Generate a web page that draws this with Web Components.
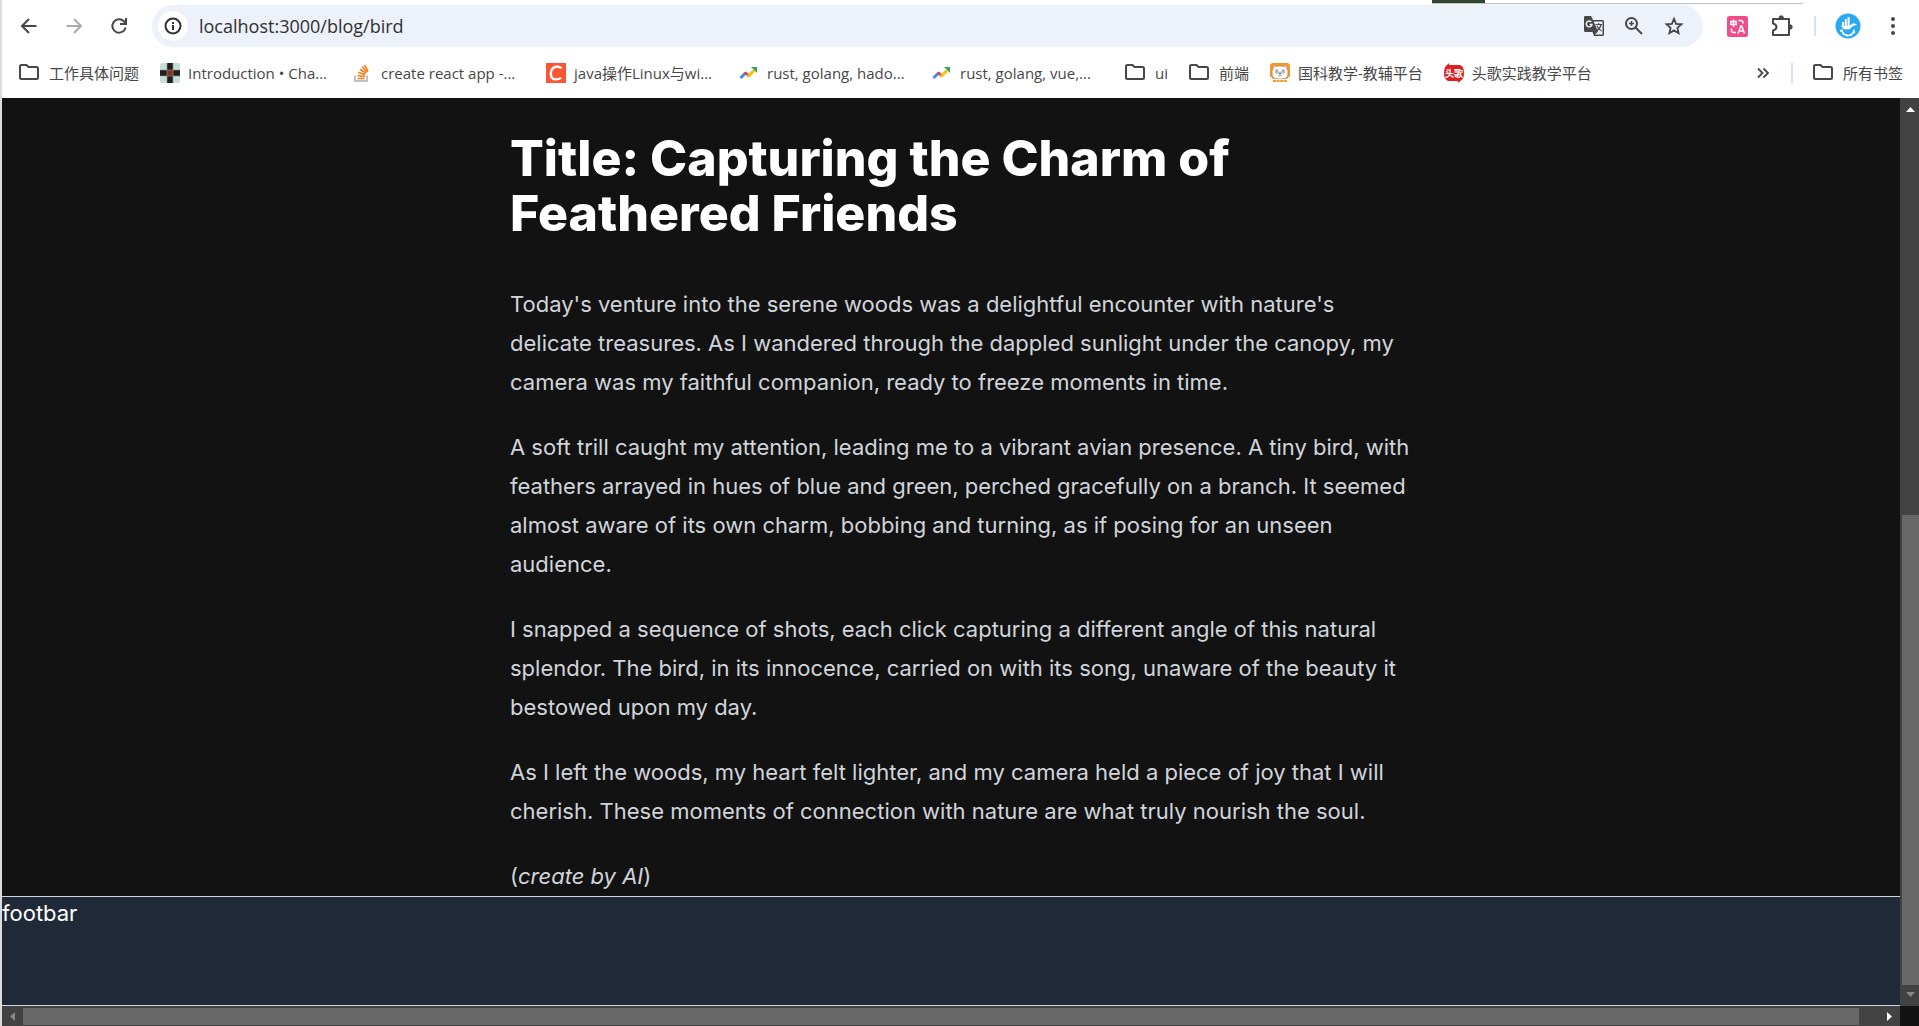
<!DOCTYPE html>
<html lang="zh-CN">
<head>
<meta charset="utf-8">
<title>localhost:3000/blog/bird</title>
<style>
html, body { height: 100%; margin: 0; }
body { background: #fff; overflow: hidden; }
</style>
</head>
<body>
<browser-window></browser-window>

<script>
const ICONS = {
  back: '<svg viewBox="0 0 20 20" width="20" height="20" fill="none" stroke="#474747" stroke-width="2"><path d="M17.5 10H3.5M10 3L3 10l7 7"/></svg>',
  forward: '<svg viewBox="0 0 20 20" width="20" height="20" fill="none" stroke="#aaa" stroke-width="2"><path d="M2.500 10H16.500M10 3l7 7-7 7"/></svg>',
  reload: '<svg viewBox="0 0 20 20" width="20" height="20" fill="none" stroke="#474747" stroke-width="2"><path d="M16.600 11.500A6.700 6.700 0 1 1 14.900 5.300L17 7.500"/><path d="M17 2v6h-6"/></svg>',
  info: '<svg viewBox="0 0 20 20" width="20" height="20" fill="none" stroke="#303030" stroke-width="2"><circle cx="10" cy="10" r="7.500"/><path d="M10 9v5M10 6v2"/></svg>',
  folder: '<svg viewBox="0 0 20 20" width="20" height="20" fill="none" stroke="#474747" stroke-width="2" stroke-linejoin="round"><path d="M1 14.500V3.500Q1 2 2.500 2H7.500l2 2H17.500Q19 4 19 5.500V14.500Q19 16 17.500 16H2.500Q1 16 1 14.500Z"/></svg>',
  tiles: '<svg viewBox="0 0 20 20" width="20" height="20"><rect width="20" height="20" rx="2" fill="#c9dcd8"/><path d="M7 0h6v7H7zM0 7h7v6H0zM13 7h7v6h-7zM7 13h6v7H7z" fill="#241d1d"/><path d="M7 7h6v6H7z" fill="#7a3420"/><path d="M7 0v20M13 0v20M0 7h20M0 13h20" stroke="#8b9a98" stroke-width=".6"/></svg>',
  stack: '<svg viewBox="0 0 20 20" width="20" height="20" fill="none"><path d="M2 12.500v5.500H14V12.500" stroke="#a9adb3" stroke-width="1.500"/><g stroke="#f48024" stroke-width="1.700"><path d="M4.500 15.500h7M4.500 12.500l7.200 1.200M5.200 9.300l7 2.600M7 6.200l6 4.200M9 3.500l5 5.700M11.500 2l3.500 6.500"/></g></svg>',
  csdn: '<svg viewBox="0 0 20 20" width="20" height="20" fill="none"><path d="M0 0h20v20H0z" fill="#fc5531"/><path d="M15.500 5.200Q13.500 3.500 10.500 3.800Q5 4.500 4.800 10.500Q4.800 16.400 10 16.400Q13 16.400 15 14.900" stroke="#fff" stroke-width="2.400"/></svg>',
  trend: '<svg viewBox="0 0 20 20" width="20" height="20" fill="none" stroke-width="2.800"><path d="M1.500 15L7 9.500" stroke="#4285f4"/><path d="M6 9.500l4 3.500" stroke="#ea4335"/><path d="M9 13.500l6-6" stroke="#fbbc04"/><path d="M12 4h6v6z" fill="#34a853"/></svg>',
  bear: '<svg viewBox="0 0 20 20" width="20" height="20"><path d="M3 0H17Q20 0 20 3V13L17 16H3L0 13V3Q0 0 3 0" fill="#f49a24"/><circle cx="5" cy="4.500" r="2" fill="#fff" stroke="#8a7660" stroke-width=".5"/><circle cx="15" cy="4.500" r="2" fill="#fff" stroke="#8a7660" stroke-width=".5"/><path d="M2.500 13Q0 3 10 3T17.500 13Q17 16 10 16T2.500 13" fill="#fff" stroke="#8a7660" stroke-width=".5"/><path d="M5 7h3M12 7h3M8 12q2 2 4 0" stroke="#666" stroke-width=".6" fill="none"/><g fill="none" stroke="#666" stroke-width=".7"><circle cx="7" cy="9" r="1.300"/><circle cx="13" cy="9" r="1.300"/></g><circle cx="10" cy="10.500" r="1" fill="#555"/><path d="M3 18h14" stroke="#f49a24" stroke-width="2.200" stroke-dasharray="3 .6"/></svg>',
  touge: '<svg viewBox="0 0 20 20" width="20" height="20"><path d="M5 0V2H16Q20 3 20 10Q20 16 17 17.500L14 20V18H4Q0 16 0 10Q0 4 3 2Z" fill="#e02020"/><text x="10" y="13.500" text-anchor="middle" font-size="9" font-weight="700" fill="#fff" font-family="Noto Sans CJK SC, sans-serif">头歌</text></svg>',
  translate: '<svg viewBox="0 0 22 22" width="22" height="22"><path d="M2 1H8l2 4H19.500Q21 5 21 6.500V19.500Q21 21 19.500 21H11L9.500 17H2.500Q1 17 1 15.500V2.500Q1 1 2 1" fill="#474747"/><path d="M10.700 6.500H19.500V19.500H12L15 16.500Z" fill="#edf1fa"/><path d="M12.500 9.500H19M15.700 8v1.500M18 9.500Q17 14 13 16M14 11q1.500 3.500 4.500 5" fill="none" stroke="#474747" stroke-width="1.200"/><path d="M8.300 7A2.900 2.900 0 1 0 9 9.500H6.500" fill="none" stroke="#edf1fa" stroke-width="1.400"/></svg>',
  zoom: '<svg viewBox="0 0 20 20" width="20" height="20" fill="none" stroke="#474747" stroke-width="2"><circle cx="7.500" cy="7.500" r="5.500"/><path d="M11.500 11.500l6.500 6.500" /><path d="M7.500 5v5M5 7.500h5" stroke-width="1.500"/></svg>',
  star: '<svg viewBox="0 0 20 20" width="20" height="20" fill="none" stroke="#474747" stroke-width="1.800"><path d="M10 2.800l2.100 5 5.400.5-4.100 3.600 1.200 5.300L10 14.400l-4.600 2.800 1.200-5.300L2.500 8.300l5.400-.5Z"/></svg>',
  pink: '<svg viewBox="0 0 21 21" width="21" height="21" fill="none" stroke="#fff" stroke-width="1.500"><rect width="21" height="21" rx="2.500" fill="#ee4c8b" stroke="none"/><path d="M3.800 5.500h5.400v3H3.800zM6.500 3.500v7.500M11.500 4.500h2.500q2 0 2 3M4.500 12.500v2q0 2 2 2H9M11 17.500l2.800-7.500h.9l2.800 7.500M12 15h4.500"/></svg>',
  puzzle: '<svg viewBox="0 0 22 22" width="22" height="22" fill="none" stroke="#474747" stroke-width="2"><path d="M2 4H18V20H2V15.500Q5.500 14.500 5.500 12T2 8.500Z" stroke-linejoin="round"/><path d="M8 3a2.200 2.200 0 0 1 4.400 0M19 9.800a2.200 2.200 0 0 1 0 4.400" fill="#474747" stroke-width="1"/></svg>',
  avatar: '<svg viewBox="0 0 26 26" width="26" height="26" fill="none" stroke="#fff"><circle cx="13" cy="13" r="12.500" fill="#29a9f2" stroke="none"/><path d="M8 14V9M10.800 14V6M13.600 14V4" stroke-width="2"/><path d="M6.500 13h8l4-2.500 3 1-4 1.500-3 3H9Z" fill="#fff" stroke-width=".6"/><path d="M7 16.500a6 6 0 0 0 12 0" stroke-width="1.600"/><path d="M5.800 17a7.500 7.500 0 0 0 14.400 0" stroke-width="2" stroke-dasharray="2 1.800"/></svg>',
  menu: '<svg viewBox="0 0 20 20" width="20" height="20" fill="#474747"><circle cx="10" cy="3" r="2"/><circle cx="10" cy="10" r="2"/><circle cx="10" cy="17" r="2"/></svg>',
  chevrons: '<svg viewBox="0 0 14 14" width="14" height="14" fill="none" stroke="#474747" stroke-width="1.800"><path d="M2 2.500l4.500 4.500L2 11.500M7.500 2.500L12 7l-4.500 4.500"/></svg>'
};

function define(name, html, setup) {
  const template = document.createElement('template');
  template.innerHTML = html;
  customElements.define(name, class extends HTMLElement {
    constructor() {
      super();
      this.attachShadow({ mode: 'open' }).append(template.content.cloneNode(true));
    }
    connectedCallback() { if (setup) setup(this, this.shadowRoot); }
  });
}

define('ui-icon', '<style>:host{display:flex;flex:none}svg{display:block}</style><span></span>',
  (el, root) => { root.querySelector('span').innerHTML = ICONS[el.getAttribute('name')] || ''; });

define('icon-button', `
<style>
:host { display: flex; flex: none; }
button { display: flex; align-items: center; justify-content: center; width: 28px; height: 28px; padding: 0; border: 0; border-radius: 50%; background: none; }
:host([round]) button { width: 30px; height: 30px; background: #fff; }
</style>
<button type="button"><slot></slot></button>`,
  (el, root) => root.querySelector('button').setAttribute('aria-label', el.getAttribute('label')));

define('bookmark-item', `
<style>
:host { display: block; flex: none; margin-right: 21px; }
:host([clipped]) { width: 172px; }
a { display: flex; align-items: center; gap: 8px; color: #474747; text-decoration: none; white-space: nowrap; }
:host([folder]) a { gap: 10px; }
</style>
<a href="#"><ui-icon></ui-icon><slot></slot></a>`,
  (el, root) => {
    const icon = document.createElement('ui-icon');
    icon.setAttribute('name', el.hasAttribute('folder') ? 'folder' : el.getAttribute('icon'));
    root.querySelector('ui-icon').replaceWith(icon);
  });

define('browser-toolbar', `
<style>
:host { display: flex; align-items: center; height: 42px; padding: 5px 12px 0 13px; }
nav { display: flex; gap: 17px; margin-right: 19px; }
.address { flex: 1; min-width: 0; display: flex; align-items: center; height: 42px; border-radius: 21px; background: #edf1fa; padding: 0 15px 0 6px; gap: 11px; }
label { flex: 1; min-width: 0; display: flex; }
input { width: 100%; border: 0; padding: 0; outline: 0; background: none; color: #303030; font: 18px/26px "Open Sans", "Noto Sans CJK SC", sans-serif; }
.tools { display: flex; align-items: center; gap: 12px; }
.extensions { display: flex; align-items: center; margin-left: 20px; gap: 17px; }
.line { width: 2px; height: 20px; background: #d3e3fd; margin: 0 1px; }
</style>
<nav>
  <icon-button label="Back"><ui-icon name="back"></ui-icon></icon-button>
  <icon-button label="Forward"><ui-icon name="forward"></ui-icon></icon-button>
  <icon-button label="Reload"><ui-icon name="reload"></ui-icon></icon-button>
</nav>
<div class="address">
  <icon-button round label="Site information"><ui-icon name="info"></ui-icon></icon-button>
  <label aria-label="Address"><input type="text" aria-label="Address" value="localhost:3000/blog/bird"></label>
  <div class="tools">
    <icon-button label="Translate"><ui-icon name="translate"></ui-icon></icon-button>
    <icon-button label="Zoom"><ui-icon name="zoom"></ui-icon></icon-button>
    <icon-button label="Bookmark"><ui-icon name="star"></ui-icon></icon-button>
  </div>
</div>
<div class="extensions">
  <icon-button label="Translator extension"><ui-icon name="pink"></ui-icon></icon-button>
  <icon-button label="Extensions"><ui-icon name="puzzle"></ui-icon></icon-button>
  <span class="line"></span>
  <icon-button label="Profile"><ui-icon name="avatar"></ui-icon></icon-button>
  <icon-button label="Menu"><ui-icon name="menu"></ui-icon></icon-button>
</div>`);

define('bookmarks-bar', `
<style>
:host { display: flex; align-items: center; justify-content: space-between; height: 51px; padding: 0 16px 0 17px; font: 15px/20px "Open Sans", "Noto Sans CJK SC", sans-serif; color: #474747; }
div { display: flex; align-items: center; }
.end { gap: 14px; }
.end bookmark-item { margin-right: 0; }
.line { width: 2px; height: 20px; background: #d3e3fd; margin-right: 6px; }
</style>
<div>
  <bookmark-item folder>工作具体问题</bookmark-item>
  <bookmark-item clipped icon="tiles">Introduction • Cha...</bookmark-item>
  <bookmark-item clipped icon="stack">create react app -...</bookmark-item>
  <bookmark-item clipped icon="csdn">java操作Linux与wi...</bookmark-item>
  <bookmark-item clipped icon="trend">rust, golang, hado...</bookmark-item>
  <bookmark-item clipped icon="trend">rust, golang, vue,...</bookmark-item>
  <bookmark-item folder>ui</bookmark-item>
  <bookmark-item folder>前端</bookmark-item>
  <bookmark-item icon="bear">国科教学-教辅平台</bookmark-item>
  <bookmark-item icon="touge">头歌实践教学平台</bookmark-item>
</div>
<div class="end">
  <icon-button label="More bookmarks"><ui-icon name="chevrons"></ui-icon></icon-button>
  <span class="line"></span>
  <bookmark-item folder>所有书签</bookmark-item>
</div>`);

define('blog-article', `
<style>
:host { display: block; max-width: 906px; margin: 0 auto; color: #d1d5db; font: 22px/39px Inter, sans-serif; }
::slotted(h1) { margin: 0 0 44px; color: #fff; font-size: 50px; line-height: 55px; font-weight: 800; }
::slotted(p) { margin: 0 0 26px; }
::slotted(p:last-child) { margin-bottom: 0; }
</style>
<slot></slot>`);

define('page-footer', `
<style>
:host { display: block; flex: 1; border: solid #d1d5db; border-width: 1px 0; background: #1f2937; color: #fff; font: 22px/33px Inter, sans-serif; }
</style>
<slot></slot>`);

define('scroll-bar', `
<style>
:host { display: flex; align-items: stretch; background: #424242; }
:host([vertical]) { flex-direction: column; }
svg { flex: none; display: block; }
.track { flex: 1; display: flex; min-width: 0; min-height: 0; }
.thumb { background: #686868; flex: none; }
:host([vertical]) .track { align-items: flex-end; }
:host([vertical]) .thumb { width: 17px; height: 54.3%; margin-left: 2px; }
:host(:not([vertical])) .thumb { height: 17px; width: 98.9%; margin-top: 2px; }
</style>
<span class="first"></span><div class="track"><div class="thumb"></div></div><span class="last"></span>`,
  (el, root) => {
    const arrow = (w, h, d, c) => '<svg width="' + w + '" height="' + h + '"><path d="' + d + '" fill="' + c + '"/></svg>';
    const v = el.hasAttribute('vertical');
    root.querySelector('.first').innerHTML = v ? arrow(19, 21, 'M6 14h9l-4.500-5z', '#fff') : arrow(21, 20, 'M13 6v9l-5-4.500z', '#868686');
    root.querySelector('.last').innerHTML = v ? arrow(19, 21, 'M6 7h9l-4.500 5z', '#868686') : arrow(21, 20, 'M8 6v9l5-4.500z', '#fff');
  });

define('web-view', `
<style>
:host { display: grid; grid-template: minmax(0, 1fr) 20px / minmax(0, 1fr) 19px; background: #121212; }
.viewport { overflow: hidden; }
.page { display: flex; flex-direction: column; box-sizing: border-box; width: calc(100% + 24px); height: 100%; padding-top: 33px; }
</style>
<div class="viewport"><div class="page"><slot></slot></div></div>
<scroll-bar vertical></scroll-bar>
<scroll-bar></scroll-bar>`);

define('browser-window', `
<style>
:host { display: flex; flex-direction: column; box-sizing: border-box; height: 100vh; border-left: 2px solid #dcdcdc; background: #fff; position: relative; }
web-view { flex: 1; min-height: 0; }
.overlay { position: absolute; top: 0; left: 74.6%; width: 371px; height: 3px; background: linear-gradient(90deg, #30452f 53px, #fff 53px); box-shadow: 0 1px 1px #bbb; }
</style>
<browser-toolbar></browser-toolbar>
<bookmarks-bar></bookmarks-bar>
<web-view>
  <blog-article>
    <h1>Title: Capturing the Charm of Feathered Friends</h1>
    <p>Today's venture into the serene woods was a delightful encounter with nature's delicate treasures. As I wandered through the dappled sunlight under the canopy, my camera was my faithful companion, ready to freeze moments in time.</p>
    <p>A soft trill caught my attention, leading me to a vibrant avian presence. A tiny bird, with feathers arrayed in hues of blue and green, perched gracefully on a branch. It seemed almost aware of its own charm, bobbing and turning, as if posing for an unseen audience.</p>
    <p>I snapped a sequence of shots, each click capturing a different angle of this natural splendor. The bird, in its innocence, carried on with its song, unaware of the beauty it bestowed upon my day.</p>
    <p>As I left the woods, my heart felt lighter, and my camera held a piece of joy that I will cherish. These moments of connection with nature are what truly nourish the soul.</p>
    <p>(<em>create by AI</em>)</p>
  </blog-article>
  <page-footer>footbar</page-footer>
</web-view>
<div class="overlay"></div>`);
</script>
</body>
</html>
